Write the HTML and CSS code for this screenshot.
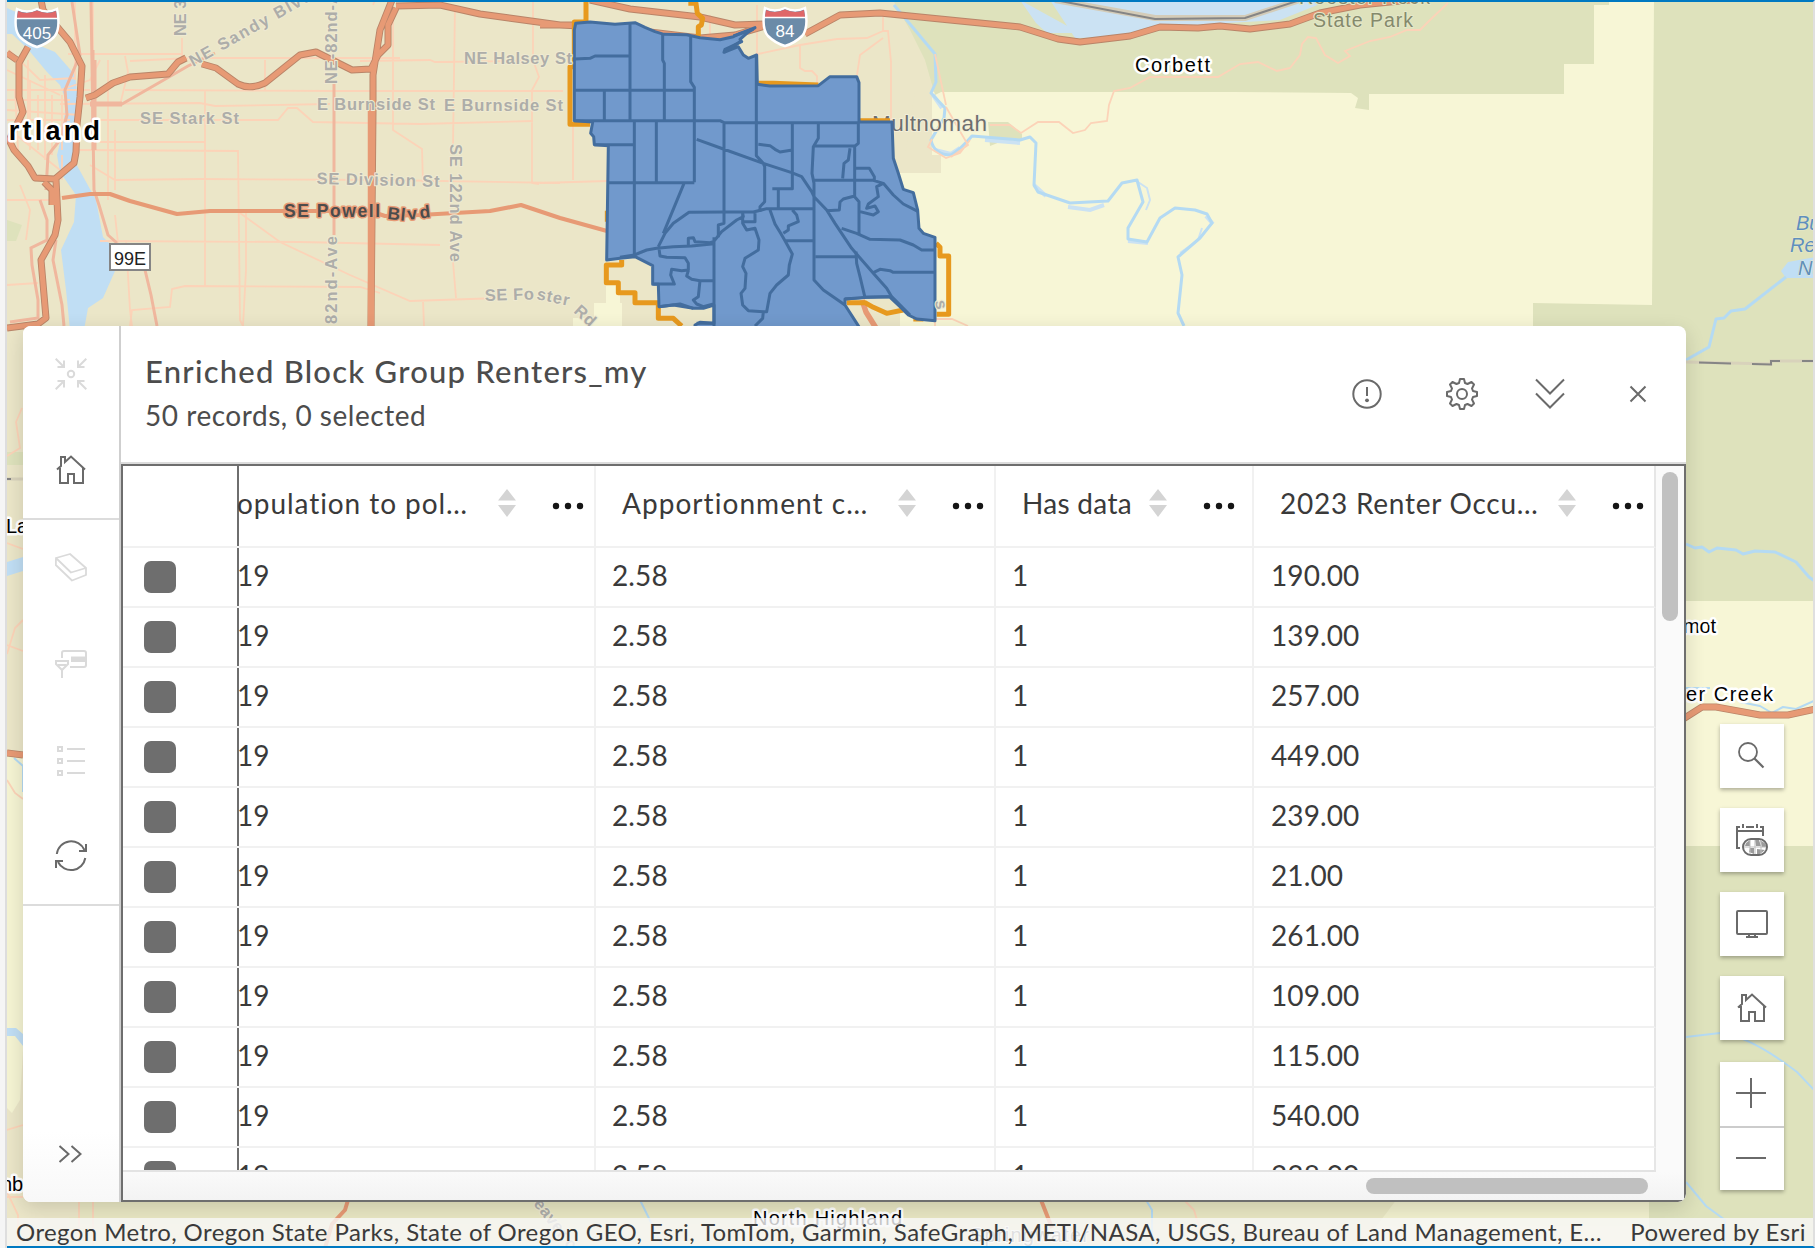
FILE: index.html
```html
<!DOCTYPE html>
<html lang="en">
<head>
<meta charset="utf-8">
<title>Enriched Block Group Renters_my</title>
<link rel="stylesheet" href="styles.css">
</head>
<body>
<div class="app">
<svg class="map" viewBox="0 0 1818 1248" width="1818" height="1248">
  <defs>
    <clipPath id="frame"><rect x="7" y="2" width="1807" height="1244"/></clipPath>
    <g id="shield">
      <path d="M-20 -18 Q-10 -13 0 -18 Q10 -13 20 -18 Q24 2 17 10 Q10 17 0 20 Q-10 17 -17 10 Q-24 2 -20 -18Z" fill="#6b8ba8" stroke="#fff" stroke-width="2.5"/>
      <path d="M-19 -16 Q-10 -12 0 -16.500 Q10 -12 19 -16 L20 -9 H-20Z" fill="#df6768"/>
      <path d="M-21 -8.500H21" stroke="#fff" stroke-width="1.500"/>
    </g>
  </defs>
  <g clip-path="url(#frame)">
    <rect width="1818" height="1248" fill="#ebe6c8"/>
    <!-- rural and forest land -->
    <path d="M941 92H1700V340H930V173H941V155H915V92Z" fill="#f7f6d6"/>
    <path d="M920 173H941V340H700V330H900V173Z" fill="#f7f6d6"/>
    <path d="M606 285H620V303H622V340H573V318H594V303H606Z" fill="#f7f6d6"/>
    <path d="M893 0H1609V5H1594V64H1564V94H1369V110L1355 108L1358 98L1351 93L1233 92H941L935 95L925 60L910 30Z" fill="#dee2bc"/>
    <path d="M988 122H1008L1022 134V140H1005L990 146Z" fill="#dee2bc"/>
    <path d="M1609 0H1660V310H1560V94H1564V64H1594V5H1609Z" fill="#f7f6d6"/>
    <path d="M915 92H932V158H941V173H920V155H905Z" fill="#ebe6c8"/>
    <path d="M1654 0H1818V601H1680V340H1533V303L1652 305Z" fill="#dee2bc"/>
    <path d="M1680 601H1818V846H1680Z" fill="#f7f6d6"/>
    <path d="M1680 846H1818V1248H1649V1190H1680Z" fill="#dee2bc"/>
    <path d="M80 1195H1649V1248H69V1217H80Z" fill="#e9e7c3"/>
    <path d="M1400 1195H1649V1248H1360Z" fill="#f2f1cf"/>
    <path d="M7 755H23V1050L20 1100L12 1113L7 1108Z" fill="#f5f4d3"/>
    <path d="M7 452H23V465H7Z M7 220L22 225L16 241H7Z" fill="#dee2bc"/>
    <!-- water -->
    <g fill="#c0def4">
      <path d="M7 8L16 12L38 45L55 52L75 75L78 100L77 135L74 160L85 180L96 200L103 237L109 243L115 271L103 298L88 308L84 330H70L66 290L61 250L74 222L76 195L60 172L57 155L63 130L66 100L60 85L47 72L27 48L12 34L7 34Z"/>
      <path d="M7 562L23 557V571L7 576Z M7 1028H16L23 1034V1046L15 1036H7Z"/>
    </g>
    <path d="M1020 0L1080 33H1047L1036 23L1020 0Z M1050 0H1330L1280 20L1210 24L1160 28L1130 37L1075 38Z" fill="#cbe2f3"/>
    <path d="M1788 262L1816 257V278H1786L1781 271Z" fill="#c0def4"/>
    <g fill="none" stroke="#cbe2f3" stroke-width="4">
      <path d="M933 95L942 108M935 150L951 154L960 148M985 140L1020 143M1034 185L1046 196M1068 207L1090 210L1104 205M1128 241L1148 243M1206 216L1213 224"/>
      <path d="M1138 182L1147 188L1150 200L1146 210M1202 228L1198 240L1180 253" stroke-width="2"/>
    </g>
    <g fill="none" stroke="#b4daf3" stroke-width="3" stroke-linejoin="round">
      <path d="M894 5L935 54L936 82L931 93L945 108L944 118L931 140Q934 155 951 155Q960 150 972 136L1020 140L1030 137L1036 143L1034 185L1038 192L1070 203L1108 201L1122 183L1137 180L1143 202L1128 228V239L1147 242L1160 218L1175 208L1195 210L1207 214L1212 223L1200 238L1178 257L1182 275L1178 313L1184 326"/>
      <path d="M1786 277L1745 309L1731 311L1724 318L1716 319L1709 347L1686 360"/>
      <path d="M1686 544L1695 548L1702 547L1709 552L1717 548L1736 550L1743 554L1755 551L1775 552L1796 562L1809 577L1816 582"/>
      <path d="M1686 688H1710M1740 702L1760 706L1772 713L1783 707L1796 709L1816 700" stroke-width="2"/>
      <path d="M1686 1037L1720 1033Q1750 1036 1797 1072L1816 1092M1686 1182L1706 1206L1725 1220V1248M14 758L23 766V792M640 1200L662 1245M1146 1200L1152 1210V1246" stroke-width="2"/>
    </g>
    <path d="M1055 0L1155 18L1245 18L1300 0" fill="none" stroke="#d4ccb8" stroke-width="6"/>
    <path d="M1055 0L1155 19L1245 18L1300 0" fill="none" stroke="#858585" stroke-width="2"/>
    <path d="M1686 362L1771 364V361H1816M7 479H23" fill="none" stroke="#d8d2bb" stroke-width="3"/>
    <path d="M1699 362.500L1731 363.500M1752 364L1771 364.500V361H1780M1802 361H1816M7 479H11" fill="none" stroke="#858585" stroke-width="2"/>
    <!-- local streets -->
    <g fill="none" stroke="#fcd3b8" stroke-width="1.800">
      <path d="M7 90H90M68 54H183M130 61L190 58H400M360 61L430 60L435 62L530 61M125 90L340 91L563 91M60 104L200 103L215 106L330 104M90 120H278L288 108H297L313 122L420 124L533 121M100 142L205 142M75 150L238 151L240 320L243 326M90 165L115 180L200 179L380 180L560 183M115 130V190M115 215L118 243M100 241L300 242L440 245M205 91V286M246 213V270L243 326M240 213L280 242L350 275L410 301L500 298M130 326L132 310L170 307L172 289L185 286L360 287L380 293M126 240L130 310L132 326M375 0L373 5M393 0V130L422 149L423 184M455 5L453 145M533 0V60L539 77L532 90V183L539 184M423 300L424 326M453 262L456 298M265 60V90M182 38V61M75 2V80M93 0V180M108 60V200M125 56L128 72L120 105M50 200L7 200M20 185L30 210L26 240M7 285L38 283M15 120L70 140M7 110L80 115M9 50L40 80L75 78M45 75V160M30 80V150M15 90L18 150M10 130L60 170"/>
      <path d="M62 155V180M100 60L90 80L60 90M7 70L60 95M7 100H70M7 120H70M28 60V145M38 95V150M52 95V155M62 95V150"/>
      <path d="M757 5V55M710 15V35M758 54L800 45L837 39L867 38L883 31V10M883 31H888L891 62V120M883 38L860 55L857 75M800 45V68L805 71H812L817 76V84M573 124V180M540 183L607 181M935 54L946 105M946 107L968 145L951 157M932 139L928 147L946 158L960 153L970 140M990 125H1010L1021 133L1038 122H1059L1073 133L1085 130L1091 123L1107 121L1109 105L1114 91L1130 88L1150 77H1218L1240 64L1258 62L1277 71L1290 68L1300 55L1302 44L1308 37L1316 38L1325 55L1338 63L1350 56L1345 51L1370 41L1390 37L1407 30L1420 30L1430 20L1448 3M935 326V319H952L968 326"/>
      <path d="M7 543L23 549M7 654L15 628L23 620M7 645L23 651M7 780L15 793L23 799M22 408L16 422L20 448L7 456M7 1130L23 1125M7 1197H23M7 1192L18 1215V1248M79 1200V1246M93 1200V1246M1184 1200L1194 1210L1200 1230"/>
    </g>
    <g fill="none" stroke="#f0b79e" stroke-width="3">
      <path d="M72 2L80 55L65 90L67 115L60 140L48 155L46 190M91 2L94 190L99 205L108 235L117 243M91 104H122L188 66L215 53M93 50V100M334 82V235M145 270L151 295L157 326M40 200L47 220V240L31 248L32 265L38 300V318L10 322M56 240L53 260L62 305L64 326"/>
      <path d="M94 60V150" stroke-width="5"/>
      <path d="M90 104H122" stroke-width="5"/>
    </g>
    <!-- arterials and freeways: casing first, then fill -->
    <g fill="none" stroke-linejoin="round">
      <g stroke="#b98468" stroke-width="7">
        <path d="M41 0L43 10L70 42L82 66L80 97L77 125L76 152L74 163L55 179L35 178L28 166L14 150L9 140L23 112L19 97V63L28 47M7 53L17 60M86 98L95 95L113 83L130 77L168 74L178 62L186 58M202 64L216 68L238 84Q250 90 265 83L300 55L316 52L340 64L352 70L371 69L378 55L388 45V25L396 8M392 0L380 30L373 75V110L371 326M396 6L440 5L480 14L560 25L580 26M590 0L630 9L700 17L735 25L765 24M540 25L575 25L650 32L700 38L735 35L765 26M805 34L840 15L880 13L980 23L1020 27L1058 39L1080 42L1130 36L1160 27L1198 28L1220 26L1250 29L1290 24L1320 13L1360 5L1410 0M56 180L58 220L55 235L41 260L46 318L38 324L7 328M44 182L52 190V205"/>
        <path d="M1680 721L1702 707H1716L1760 715H1788L1816 709M7 753L23 755"/>
      </g>
      <g stroke="#e79a75" stroke-width="5.200">
        <path d="M41 0L43 10L70 42L82 66L80 97L77 125L76 152L74 163L55 179L35 178L28 166L14 150L9 140L23 112L19 97V63L28 47M7 53L17 60M86 98L95 95L113 83L130 77L168 74L178 62L186 58M202 64L216 68L238 84Q250 90 265 83L300 55L316 52L340 64L352 70L371 69L378 55L388 45V25L396 8M392 0L380 30L373 75V110L371 326M396 6L440 5L480 14L560 25L580 26M590 0L630 9L700 17L735 25L765 24M540 25L575 25L650 32L700 38L735 35L765 26M805 34L840 15L880 13L980 23L1020 27L1058 39L1080 42L1130 36L1160 27L1198 28L1220 26L1250 29L1290 24L1320 13L1360 5L1410 0M56 180L58 220L55 235L41 260L46 318L38 324L7 328M44 182L52 190V205"/>
        <path d="M62 198L90 194H110L130 201L177 214L210 211H370L385 216L420 215L490 211L521 205L560 218L607 231" stroke-width="4.200"/>
        <path d="M371 110V326" stroke-width="6.500"/>
        <path d="M7 753L23 755M1680 721L1702 707H1716L1760 715H1788L1816 709M862 300L866 312L876 328" stroke-width="5.500"/>
        <path d="M348 1200L345 1210L332 1224L325 1248M1041 1200L1052 1228" stroke-width="4"/>
      </g>
    </g>
    <text class="county" x="872" y="131" textLength="115">Multnomah</text>
    <!-- study area boundary and block groups -->
    <g transform="translate(540) scale(.33333)" fill="none" stroke-linejoin="round">
      <path class="bound" d="M138 0V66H103V200H90V373H150M445 10H468L472 40L488 55L484 75L475 80V110M655 250H700L835 255M960 362H1050M245 780V795H199V848H235V878H285V908H355V955H400L425 978M1188 730L1200 742V768H1226V943H1190M920 908H975L1000 922L1040 940L1090 930M1120 957H1150M202 632V665"/>
      <path class="group" d="M107 70L150 66L225 73L285 68L315 82L345 95L372 103L440 104L480 113L540 119L580 110L600 100L645 83L620 100L600 118L605 125L555 148L552 157L595 140L610 165L625 175L650 165L652 253L690 258L835 257L870 230H950L957 248V366H1056L1060 475L1075 520L1090 568L1120 578L1133 630L1137 685L1150 700L1185 712V962L1130 957L1105 945L1080 920L1048 890L980 892L915 897V915L960 985H465V975L480 967L522 970V915L490 925H460L400 915L357 920L355 853H338V797L285 770L240 775L200 780L205 437L163 434L161 410L152 400L158 366L103 362V90Z"/>
      <g class="lines">
        <path d="M552 157L600 125M580 108L640 88M105 177L150 175L165 168H270M270 70V362M103 271H463M193 271V362M368 104V180L373 190V360M452 110V245L463 262V547M103 362H540L552 368H957M649 165V467L670 490L674 500V605L660 620V635M283 366V770M163 434H283M349 366V547M205 548H463M432 550L370 700M552 368V670L535 675V712M470 418L550 447L670 490L755 518L785 530L815 575L822 590L860 630L885 670L905 700L935 745L1000 820L1040 865L1055 890L1110 945M655 433L690 437L705 448L720 456L757 450M757 370V566H697M715 570V625M835 370V415L820 440L816 520L822 550V840L850 870L915 915M820 438H945L955 430V368M944 440V590L957 605V705M930 445L925 480L912 490L908 535M822 541H1000L1030 550L1060 585L1090 612L1135 635M948 505H988L1003 530V545M1030 550L1010 560L1015 590L985 612L980 625L1005 618L1015 635L1000 645L960 635M944 588L910 597L900 606L898 630L860 632"/>
        <path d="M240 772L283 765L320 750L350 745L400 740L455 738L515 732L545 695L590 660L610 650L608 640M355 740L375 700L400 670L447 637L552 636L640 636L680 626H820M357 745L360 768L380 772L435 773L445 790V810L425 812L395 808L392 825L403 852H340M445 812L440 828L455 838L480 842H520M480 842L475 890L460 900L470 912L490 920L520 912M445 738V715L460 713L465 725L510 728L520 725M522 712V978M608 640V670L620 690L645 685L657 720L655 750L615 775L608 800L618 820L615 865L603 880L608 915L625 932L670 935L680 935L690 880L710 855L745 825L748 795L757 762L735 722L722 700L705 672L690 630M645 640V665H610M670 935L668 955L645 978M757 630L770 645L775 665L745 678V690L730 700M735 722H820M826 770H945M905 685L950 700L990 718L1080 720L1120 735L1145 750H1183M1000 818L1020 808L1050 812L1060 817H1183M948 755L950 790L960 830L975 893M915 897L980 892L1048 890M470 970L522 970M357 920L420 912L460 925"/>
      </g>
    </g>
    <!-- labels -->
    <g class="street">
      <text x="464" y="64" textLength="108">NE Halsey St</text>
      <text x="317" y="109.500" textLength="118">E Burnside St</text>
      <text x="444" y="111" textLength="119">E Burnside St</text>
      <text x="140" y="124" textLength="99">SE Stark St</text>
      <text transform="translate(316.500 184) rotate(1.300)" textLength="123">SE Division St</text>
      <text transform="translate(450 144) rotate(90)" textLength="118">SE 122nd Ave</text>
      <text transform="translate(337 84) rotate(-90)" textLength="92">NE-82nd-A</text>
      <text transform="translate(337 324) rotate(-90)" textLength="88">82nd-Ave</text>
      <text transform="translate(186 36) rotate(-90)" textLength="62">NE 33rd</text>
      <text transform="translate(193 67) rotate(-29.500)" textLength="138">NE Sandy Blvd</text>
      <text transform="translate(485 301) rotate(-2)" textLength="49">SE Fo</text>
      <text transform="translate(536 299) rotate(12)" textLength="33">ster</text>
      <text transform="translate(573 312) rotate(42)" textLength="23">Rd</text>
      <text transform="translate(533 1204) rotate(52)" textLength="66">eaver cr</text>
      <text transform="translate(935 301) rotate(80)">s</text>
    </g>
    <g class="blvd">
      <text x="284" y="216.500" textLength="96">SE Powell</text>
      <text transform="translate(387 219) rotate(6)" textLength="18">Bl</text>
      <text transform="translate(408 220) rotate(-7)" textLength="23">vd</text>
    </g>
    <text class="city" x="-11" y="139.500" textLength="111">ortland</text>
    <g class="town">
      <text x="1135" y="72" textLength="75">Corbett</text>
      <text x="1656" y="633" textLength="60">Wilmot</text>
      <text x="1686" y="701" textLength="87">er Creek</text>
      <text x="6" y="533">La</text>
      <text x="1" y="1191">nb</text>
      <text x="753" y="1225" textLength="149">North Highland</text>
    </g>
    <text class="town pale" x="970" y="1242" textLength="119">Springwater</text>
    <g class="park">
      <text x="1299" y="4" textLength="131">Rooster Rock</text>
      <text x="1313" y="26.500" textLength="100">State Park</text>
    </g>
    <g class="reservoir"><text x="1796" y="230">Bull</text><text x="1790" y="252">Res</text><text x="1798" y="275">Nu</text></g>
    <use href="#shield" x="37" y="27"/>
    <text class="route" x="37" y="39">405</text>
    <use href="#shield" x="785" y="26"/>
    <text class="route" x="785" y="37">84</text>
    <rect x="110" y="244" width="40" height="26" fill="#fff" stroke="#858585" stroke-width="2"/>
    <text class="state" x="130" y="264.500">99E</text>
  </g>
</svg>

<svg class="sprite" width="0" height="0">
  <symbol id="zoom-to" viewBox="0 0 32 32"><g fill="none" stroke="currentColor" stroke-width="2"><path d="M.7.7L9 9M9 2.500V9H2.500M31.300.7L23 9M23 2.500V9H29.500M.7 31.300L9 23M9 29.500V23H2.500M31.300 31.300L23 23M23 29.500V23H29.500"/><circle cx="16" cy="16" r="3.200"/></g></symbol>
  <symbol id="home" viewBox="0 0 32 32"><path d="M2 15.500L6 12V3H10V8L16 2.500L30 15.500M5 14V29H13V20H19V29H28V14" fill="none" stroke="currentColor" stroke-width="2"/></symbol>
  <symbol id="eraser" viewBox="0 0 32 32"><path d="M1 6L15 2L31 16L16 20.500ZM1 6L.8 13L17 28.500L31 23V16" fill="none" stroke="currentColor" stroke-width="1.800" stroke-linejoin="round"/></symbol>
  <symbol id="filter" viewBox="0 0 32 32"><g fill="none" stroke="currentColor" stroke-width="2"><path d="M7 10V5Q7 3 9 3H29Q31 3 31 5V17Q31 19 29 19H15"/><path d="M0 13H14M1 13V16L7 22L13 16V13M3 17H11M7 21V30"/></g><path d="M16 8.500H31V14H16Z" fill="currentColor"/></symbol>
  <symbol id="list" viewBox="0 0 32 32"><path d="M3 3H7V7H3ZM3 15H7V19H3ZM3 27H7V31H3ZM12 5H30M12 17H30M12 29H30" fill="none" stroke="currentColor" stroke-width="2"/></symbol>
  <symbol id="refresh" viewBox="0 0 32 32"><path d="M1.800 14A14.500 14.500 0 0 1 29.500 10M31 4V11H24M30.300 18A14.500 14.500 0 0 1 3 22M1 28V21H8" fill="none" stroke="currentColor" stroke-width="2"/></symbol>
  <symbol id="chevrons" viewBox="0 0 32 32"><path d="M4.500 8L13.500 16L4.500 24M16.500 8L25.500 16L16.500 24" fill="none" stroke="currentColor" stroke-width="2"/></symbol>
  <symbol id="alert" viewBox="0 0 32 32"><circle cx="16" cy="16" r="13.700" fill="none" stroke="currentColor" stroke-width="2"/><path d="M16 9V18" stroke="currentColor" stroke-width="2"/><circle cx="16" cy="22.300" r="1.900" fill="currentColor"/></symbol>
  <symbol id="gear" viewBox="0 0 32 32"><g fill="none" stroke="currentColor" stroke-width="2" stroke-linejoin="round"><circle cx="16" cy="16" r="5"/><path d="M14 1H18L19 5L21.500 6L25.500 4L28 6.500L26 10.500L27 13L31 14V18L27 19L26 21.500L28 25.500L25.500 28L21.500 26L19 27L18 31H14L13 27L10.500 26L6.500 28L4 25.500L6 21.500L5 19L1 18V14L5 13L6 10.500L4 6.500L6.500 4L10.500 6L13 5Z"/></g></symbol>
  <symbol id="collapse" viewBox="0 0 32 32"><path d="M2 1.500L16 15.500L30 1.500M2 15.500L16 29.500L30 15.500" fill="none" stroke="currentColor" stroke-width="2"/></symbol>
  <symbol id="close" viewBox="0 0 32 32"><path d="M8.500 8.500L23.500 23.500M23.500 8.500L8.500 23.500" fill="none" stroke="currentColor" stroke-width="2"/></symbol>
  <symbol id="sort" viewBox="0 0 20 28"><path d="M10 0L19 11.500H1ZM1 16H19L10 28Z" fill="#d4d4d4"/></symbol>
  <symbol id="dots" viewBox="0 0 32 8"><g fill="#151515"><circle cx="4" cy="4" r="3.200"/><circle cx="16" cy="4" r="3.200"/><circle cx="28" cy="4" r="3.200"/></g></symbol>
  <symbol id="search" viewBox="0 0 32 32"><path d="M18.500 18.500L27.500 27.500" fill="none" stroke="currentColor" stroke-width="2.200"/><circle cx="12" cy="12" r="9" fill="none" stroke="currentColor" stroke-width="1.800"/></symbol>
  <symbol id="calendar" viewBox="0 0 32 32"><g fill="none" stroke="currentColor" stroke-width="2"><path d="M4 24H1V3H4M10 3H18M24 3H27V12M7 0V4M21 0V4M1 7H27"/></g><rect x="7" y="15" width="24" height="16" rx="8" fill="#fff" stroke="currentColor" stroke-width="2"/><path d="M10 19L14 16V22H9ZM14 24H18V30L13 28ZM19 16H23L25 22H20ZM24 16L30 20V23H26ZM21 25L29 26L24 30H21Z" fill="#9b9b9b"/><path d="M8 23H30M19 16V30M14 16V30M25 16V30" stroke="#bdbdbd" fill="none"/></symbol>
  <symbol id="monitor" viewBox="0 0 32 32"><path d="M2 3H30Q31 3 31 4V25Q31 26 30 26H2Q1 26 1 25V4Q1 3 2 3ZM13 26V29M19 26V29M10 29H22" fill="none" stroke="currentColor" stroke-width="2"/></symbol>
  <symbol id="plus" viewBox="0 0 32 32"><path d="M0 15H30M15 0V30" stroke="currentColor" stroke-width="2"/></symbol>
  <symbol id="minus" viewBox="0 0 32 32"><path d="M0 15H30" stroke="currentColor" stroke-width="2"/></symbol>
</svg>

<section class="panel">
  <nav class="rail">
    <div class="rail-group">
      <button class="rail-btn off"><svg class="icon"><use href="#zoom-to"/></svg></button>
      <button class="rail-btn"><svg class="icon"><use href="#home"/></svg></button>
    </div>
    <div class="rail-group">
      <button class="rail-btn off"><svg class="icon"><use href="#eraser"/></svg></button>
      <button class="rail-btn off"><svg class="icon"><use href="#filter"/></svg></button>
      <button class="rail-btn off"><svg class="icon"><use href="#list"/></svg></button>
      <button class="rail-btn"><svg class="icon"><use href="#refresh"/></svg></button>
    </div>
    <button class="rail-btn expand"><svg class="icon"><use href="#chevrons"/></svg></button>
  </nav>
  <div class="content">
    <header class="head">
      <div class="titles">
        <h1 class="title">Enriched Block Group Renters_my</h1>
        <p class="subtitle">50 records, 0 selected</p>
      </div>
      <div class="actions">
        <svg class="icon alert"><use href="#alert"/></svg>
        <svg class="icon gear"><use href="#gear"/></svg>
        <svg class="icon"><use href="#collapse"/></svg>
        <svg class="icon"><use href="#close"/></svg>
      </div>
    </header>
    <div class="grid">
      <div class="viewport">
        <div class="rows">
          <div class="row header">
            <div class="cell pin"></div>
            <div class="cell th first"><span class="label l1">opulation to pol…</span><svg class="sort"><use href="#sort"/></svg><svg class="dots"><use href="#dots"/></svg></div>
            <div class="cell th"><span class="label l2">Apportionment c…</span><svg class="sort"><use href="#sort"/></svg><svg class="dots"><use href="#dots"/></svg></div>
            <div class="cell th short"><span class="label l3">Has data</span><svg class="sort"><use href="#sort"/></svg><svg class="dots"><use href="#dots"/></svg></div>
            <div class="cell th"><span class="label l4">2023 Renter Occu…</span><svg class="sort"><use href="#sort"/></svg><svg class="dots"><use href="#dots"/></svg></div>
          </div>
          <div class="row"><div class="cell pin"><i class="box"></i></div><div class="cell first">19</div><div class="cell">2.58</div><div class="cell">1</div><div class="cell">190.00</div></div>
          <div class="row"><div class="cell pin"><i class="box"></i></div><div class="cell first">19</div><div class="cell">2.58</div><div class="cell">1</div><div class="cell">139.00</div></div>
          <div class="row"><div class="cell pin"><i class="box"></i></div><div class="cell first">19</div><div class="cell">2.58</div><div class="cell">1</div><div class="cell">257.00</div></div>
          <div class="row"><div class="cell pin"><i class="box"></i></div><div class="cell first">19</div><div class="cell">2.58</div><div class="cell">1</div><div class="cell">449.00</div></div>
          <div class="row"><div class="cell pin"><i class="box"></i></div><div class="cell first">19</div><div class="cell">2.58</div><div class="cell">1</div><div class="cell">239.00</div></div>
          <div class="row"><div class="cell pin"><i class="box"></i></div><div class="cell first">19</div><div class="cell">2.58</div><div class="cell">1</div><div class="cell">21.00</div></div>
          <div class="row"><div class="cell pin"><i class="box"></i></div><div class="cell first">19</div><div class="cell">2.58</div><div class="cell">1</div><div class="cell">261.00</div></div>
          <div class="row"><div class="cell pin"><i class="box"></i></div><div class="cell first">19</div><div class="cell">2.58</div><div class="cell">1</div><div class="cell">109.00</div></div>
          <div class="row"><div class="cell pin"><i class="box"></i></div><div class="cell first">19</div><div class="cell">2.58</div><div class="cell">1</div><div class="cell">115.00</div></div>
          <div class="row"><div class="cell pin"><i class="box"></i></div><div class="cell first">19</div><div class="cell">2.58</div><div class="cell">1</div><div class="cell">540.00</div></div>
          <div class="row"><div class="cell pin"><i class="box"></i></div><div class="cell first">19</div><div class="cell">2.58</div><div class="cell">1</div><div class="cell">238.00</div></div>
        </div>
        <div class="vscroll"><div class="thumb-v"></div></div>
      </div>
      <div class="hscroll"><div class="thumb-h"></div></div>
    </div>
  </div>
</section>

<aside class="tools">
  <button class="tool"><svg class="icon"><use href="#search"/></svg></button>
  <button class="tool"><svg class="icon"><use href="#calendar"/></svg></button>
  <button class="tool"><svg class="icon"><use href="#monitor"/></svg></button>
  <button class="tool"><svg class="icon"><use href="#home"/></svg></button>
  <div class="zoom">
    <button class="tool"><svg class="icon"><use href="#plus"/></svg></button>
    <button class="tool"><svg class="icon"><use href="#minus"/></svg></button>
  </div>
</aside>

<footer class="credits"><span class="sources">Oregon Metro, Oregon State Parks, State of Oregon GEO, Esri, TomTom, Garmin, SafeGraph, METI/NASA, USGS, Bureau of Land Management, E…</span><span class="powered">Powered by Esri</span></footer>
</div>
</body>
</html>
```
FILE: styles.css
```css
* { box-sizing: border-box; }
body { margin: 0; background: #f6f6f6; }
button { padding: 0; border: 0; background: none; color: inherit; }

.app {
  position: relative;
  width: 1818px;
  height: 1248px;
  overflow: hidden;
  font-family: Lato, "Open Sans", sans-serif;
  color: #3a3a3a;
  background: linear-gradient(90deg, #f5f5f5 5px, #dedede 5px 7px, #fff 7px);
}
.app::before {
  content: "";
  position: absolute;
  inset: 0 3px 0 7px;
  border-top: 2px solid #0079c1;
  border-bottom: 2px solid #0079c1;
  border-right: 2px solid #dfdfdf;
  z-index: 5;
  pointer-events: none;
}
.map { position: absolute; inset: 0; font-family: "Liberation Sans", Arial, sans-serif; }
.sprite { position: absolute; }
.icon { display: block; width: 32px; height: 32px; }

.map text { paint-order: stroke; stroke-linejoin: round; }
.street { font-size: 16.500px; font-weight: 700; fill: #adada9; stroke: #efead2; stroke-width: 2px; }
.blvd { font-size: 17.500px; font-weight: 700; fill: #4c4c4c; stroke: #e79a75; stroke-width: 3px; }
.city { font-size: 27px; font-weight: 700; fill: #000; stroke: #fff; stroke-width: 5px; }
.town { font-size: 20px; fill: #000; stroke: #fff; stroke-width: 5px; }
.pale { fill: #7d7d7d; stroke-width: 2px; }
.county { font-size: 22.500px; fill: #6e6e6e; stroke: #f3efd9; stroke-width: 2px; }
.park { font-size: 19.500px; fill: #84896c; stroke: #e4e7c8; stroke-width: 2px; }
.reservoir { font-size: 20px; font-style: italic; fill: #5f8fbd; stroke: #e6eacb; stroke-width: 1px; }
.route { font-size: 17px; fill: #fff; text-anchor: middle; }
.state { font-size: 18px; fill: #222; text-anchor: middle; }
.bound { stroke: #e7991e; stroke-width: 15px; }
.group { fill: #7199cc; stroke: #436d9e; stroke-width: 9px; }
.lines { stroke: #436d9e; stroke-width: 9px; }

.panel {
  position: absolute;
  left: 23px;
  top: 326px;
  width: 1663px;
  height: 876px;
  display: flex;
  border-radius: 8px;
  overflow: hidden;
  background: #fff;
  box-shadow: 0 6px 20px rgba(0, 0, 0, .14);
}
.panel + .tools { z-index: 2; }
.rail {
  width: 98px;
  display: flex;
  flex-direction: column;
  border-right: 2px solid #cfcfcf;
  color: #6a6a6a;
  background: linear-gradient(#fff 92%, #f8f8f8);
}
.rail-group { border-bottom: 2px solid #dcdcdc; }
.rail-btn { display: flex; width: 96px; height: 96px; align-items: center; justify-content: center; }
.off { color: #dadada; }
.expand { margin-top: auto; }
.content { flex: 1; display: flex; flex-direction: column; min-width: 0; }
.head {
  height: 138px;
  display: flex;
  justify-content: space-between;
  padding: 25px 32px 0 24px;
  border-bottom: 2px solid #dcdcdc;
  color: #4c4c4c;
}
.title { margin: 0; font-size: 31px; line-height: 40px; font-weight: 500; letter-spacing: 1.230px; }
.subtitle { margin: 4px 0 0; font-size: 28px; line-height: 40px; letter-spacing: .530px; }
.actions { display: flex; gap: 56px; padding-top: 27px; color: #6a6a6a; }
.alert { margin-right: 7px; }

.grid { flex: 1; display: flex; flex-direction: column; min-height: 0; border: 2px solid #6e6e6e; border-bottom-right-radius: 8px; background: #fafafa; }
.viewport { height: 706px; display: flex; }
.rows { width: 1533px; overflow: hidden; border-bottom: 2px solid #e3e3e3; background: #fff; }
.row {
  display: grid;
  grid-template-columns: 116px 357px 400px 258px 402px;
  height: 60px;
  font-size: 28px;
}
.row.header { height: 82px; }
.cell {
  display: flex;
  align-items: center;
  padding: 0 0 4px 16px;
  border-right: 2px solid #f1f1f1;
  border-bottom: 2px solid #f1f1f1;
  white-space: nowrap;
  letter-spacing: .1px;
}
.cell:last-child { border-right-color: #e6e6e6; padding-left: 17px; }
.cell.pin { padding: 0 0 1px 21px; border-right-color: #6e6e6e; }
.box { width: 32px; height: 32px; border-radius: 7px; background: #6e6e6e; }
.cell.th { padding: 0 10px 0 26px; }
.cell.first, .cell.th.first { margin-left: -2px; padding-left: 0; }
.cell.th.short { padding-right: 17px; }
.label { flex: 1; padding-bottom: 7px; }
.l1 { letter-spacing: .930px; }
.l2 { letter-spacing: 1.050px; }
.l3 { letter-spacing: .3px; }
.l4 { letter-spacing: .750px; }
.sort { width: 20px; height: 28px; margin-bottom: 6px; }
.dots { width: 32px; height: 8px; margin-left: 35px; }
.vscroll { flex: 1; padding: 6px 5px 0 6px; }
.thumb-v { width: 16px; height: 149px; border-radius: 8px; background: #c1c1c1; }
.hscroll { flex: 1; display: flex; justify-content: flex-end; padding: 6px 36px 0 0; background: linear-gradient(#fafafa, #f3f3f3); }
.thumb-h { width: 282px; height: 16px; border-radius: 8px; background: #c0c0c0; }

.tools { position: absolute; left: 1720px; top: 724px; width: 64px; display: flex; flex-direction: column; gap: 20px; color: #6a6a6a; }
.tool { display: flex; width: 64px; height: 64px; align-items: center; justify-content: center; background: #fff; box-shadow: 0 2px 4px rgba(0, 0, 0, .3); }
.zoom { margin-top: 2px; display: flex; flex-direction: column; background: #ccc; gap: 2px; box-shadow: 0 2px 4px rgba(0, 0, 0, .3); }
.zoom .tool { box-shadow: none; height: 64px; }
.zoom .tool:last-child { height: 62px; }

.credits {
  position: absolute;
  left: 7px;
  right: 3px;
  bottom: 2px;
  height: 28px;
  display: flex;
  justify-content: space-between;
  padding: 0 9px 0 9px;
  font-size: 24px;
  line-height: 28px;
  white-space: nowrap;
  background: rgba(248, 248, 248, .8);
}
.sources { letter-spacing: .410px; }
.powered { letter-spacing: .480px; }
```
